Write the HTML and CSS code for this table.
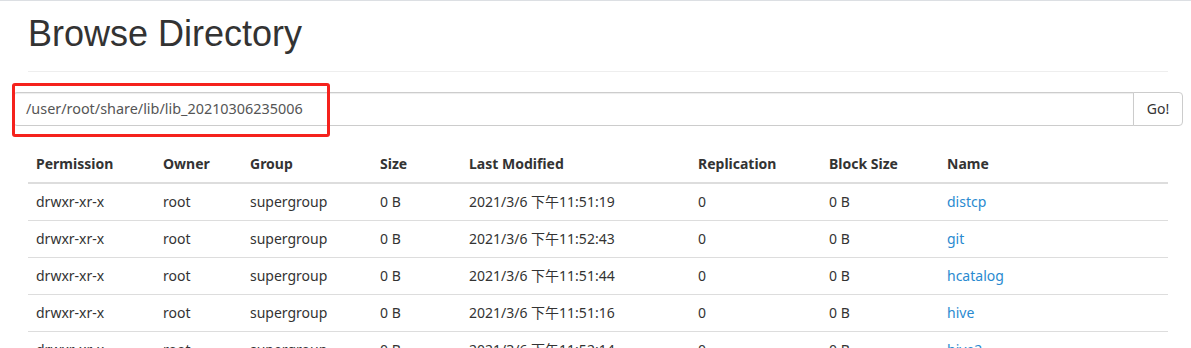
FILE: index.html
```html
<!DOCTYPE html>
<html lang="zh-CN">
<head>
<meta charset="utf-8">
<title>Browsing HDFS</title>
<link rel="stylesheet" href="styles.css">
</head>
<body>
<div class="topline"></div>
<div class="container">
  <div class="page-header">
    <h1>Browse Directory</h1>
  </div>
  <div class="input-group">
    <div class="path-input">/user/root/share/lib/lib_20210306235006</div>
    <button class="go-btn" type="button">Go!</button>
    <div class="highlight"></div>
  </div>
  <table class="files">
    <colgroup>
      <col class="c-perm"><col class="c-owner"><col class="c-group"><col class="c-size">
      <col class="c-mod"><col class="c-rep"><col class="c-block"><col class="c-name">
    </colgroup>
    <thead>
      <tr>
        <th>Permission</th><th>Owner</th><th>Group</th><th>Size</th>
        <th>Last Modified</th><th>Replication</th><th>Block Size</th><th>Name</th>
      </tr>
    </thead>
    <tbody>
      <tr><td>drwxr-xr-x</td><td>root</td><td>supergroup</td><td>0 B</td><td>2021/3/6 下午11:51:19</td><td>0</td><td>0 B</td><td><a href="#">distcp</a></td></tr>
      <tr><td>drwxr-xr-x</td><td>root</td><td>supergroup</td><td>0 B</td><td>2021/3/6 下午11:52:43</td><td>0</td><td>0 B</td><td><a href="#">git</a></td></tr>
      <tr><td>drwxr-xr-x</td><td>root</td><td>supergroup</td><td>0 B</td><td>2021/3/6 下午11:51:44</td><td>0</td><td>0 B</td><td><a href="#">hcatalog</a></td></tr>
      <tr><td>drwxr-xr-x</td><td>root</td><td>supergroup</td><td>0 B</td><td>2021/3/6 下午11:51:16</td><td>0</td><td>0 B</td><td><a href="#">hive</a></td></tr>
      <tr><td>drwxr-xr-x</td><td>root</td><td>supergroup</td><td>0 B</td><td>2021/3/6 下午11:52:14</td><td>0</td><td>0 B</td><td><a href="#">hive2</a></td></tr>
    </tbody>
  </table>
</div>
</body>
</html>
```

FILE: styles.css
```css
html, body {
  margin: 0;
  padding: 0;
  background: #fff;
}
body {
  font-family: "Noto Sans", "Noto Sans CJK SC", sans-serif;
  font-size: 14px;
  line-height: 20px;
  color: #333;
  overflow: hidden;
}
.topline {
  height: 1px;
  background: #dcdfe3;
}
.container {
  width: 1170px;
  margin-left: 13px;
}
.page-header {
  margin: 0 15px;
  padding: 13px 0 17px;
  border-bottom: 1px solid #eee;
}
.page-header h1 {
  margin: 0;
  font-family: "Liberation Sans", Arial, sans-serif;
  font-weight: 400;
  font-size: 36px;
  line-height: 40px;
  color: #333;
}
.input-group {
  position: relative;
  display: flex;
  margin-top: 20px;
  height: 34px;
}
.path-input {
  flex: 1;
  box-sizing: border-box;
  height: 34px;
  padding: 6px 12px;
  border: 1px solid #ccc;
  border-radius: 4px 0 0 4px;
  box-shadow: inset 0 1px 1px rgba(0,0,0,.075);
  color: #555;
  font-size: 14.4px;
  line-height: 20px;
}
.go-btn {
  box-sizing: border-box;
  width: 50px;
  height: 34px;
  margin-left: -1px;
  padding: 6px 0;
  border: 1px solid #ccc;
  border-radius: 0 4px 4px 0;
  background: #fff;
  color: #333;
  font-family: inherit;
  font-size: 14px;
  line-height: 20px;
}
.highlight {
  position: absolute;
  left: -1px;
  top: -9px;
  width: 318px;
  height: 54px;
  box-sizing: border-box;
  border: 3px solid #f5221d;
  border-radius: 3px;
  pointer-events: none;
}
.files {
  width: 1140px;
  margin: 20px 15px 0;
  border-collapse: collapse;
  border-spacing: 0;
  table-layout: fixed;
}
.c-perm { width: 127px; }
.c-owner { width: 87px; }
.c-group { width: 130px; }
.c-size { width: 89px; }
.c-mod { width: 229px; }
.c-rep { width: 131px; }
.c-block { width: 118px; }
.c-name { width: 229px; }
.files th, .files td {
  padding: 8px;
  text-align: left;
  vertical-align: top;
  line-height: 20px;
  white-space: nowrap;
}
.files th {
  font-weight: 700;
  border-bottom: 2px solid #ddd;
}
.files tbody tr + tr td {
  border-top: 1px solid #ddd;
}
.files a {
  color: #2a8ad0;
  text-decoration: none;
}
```
